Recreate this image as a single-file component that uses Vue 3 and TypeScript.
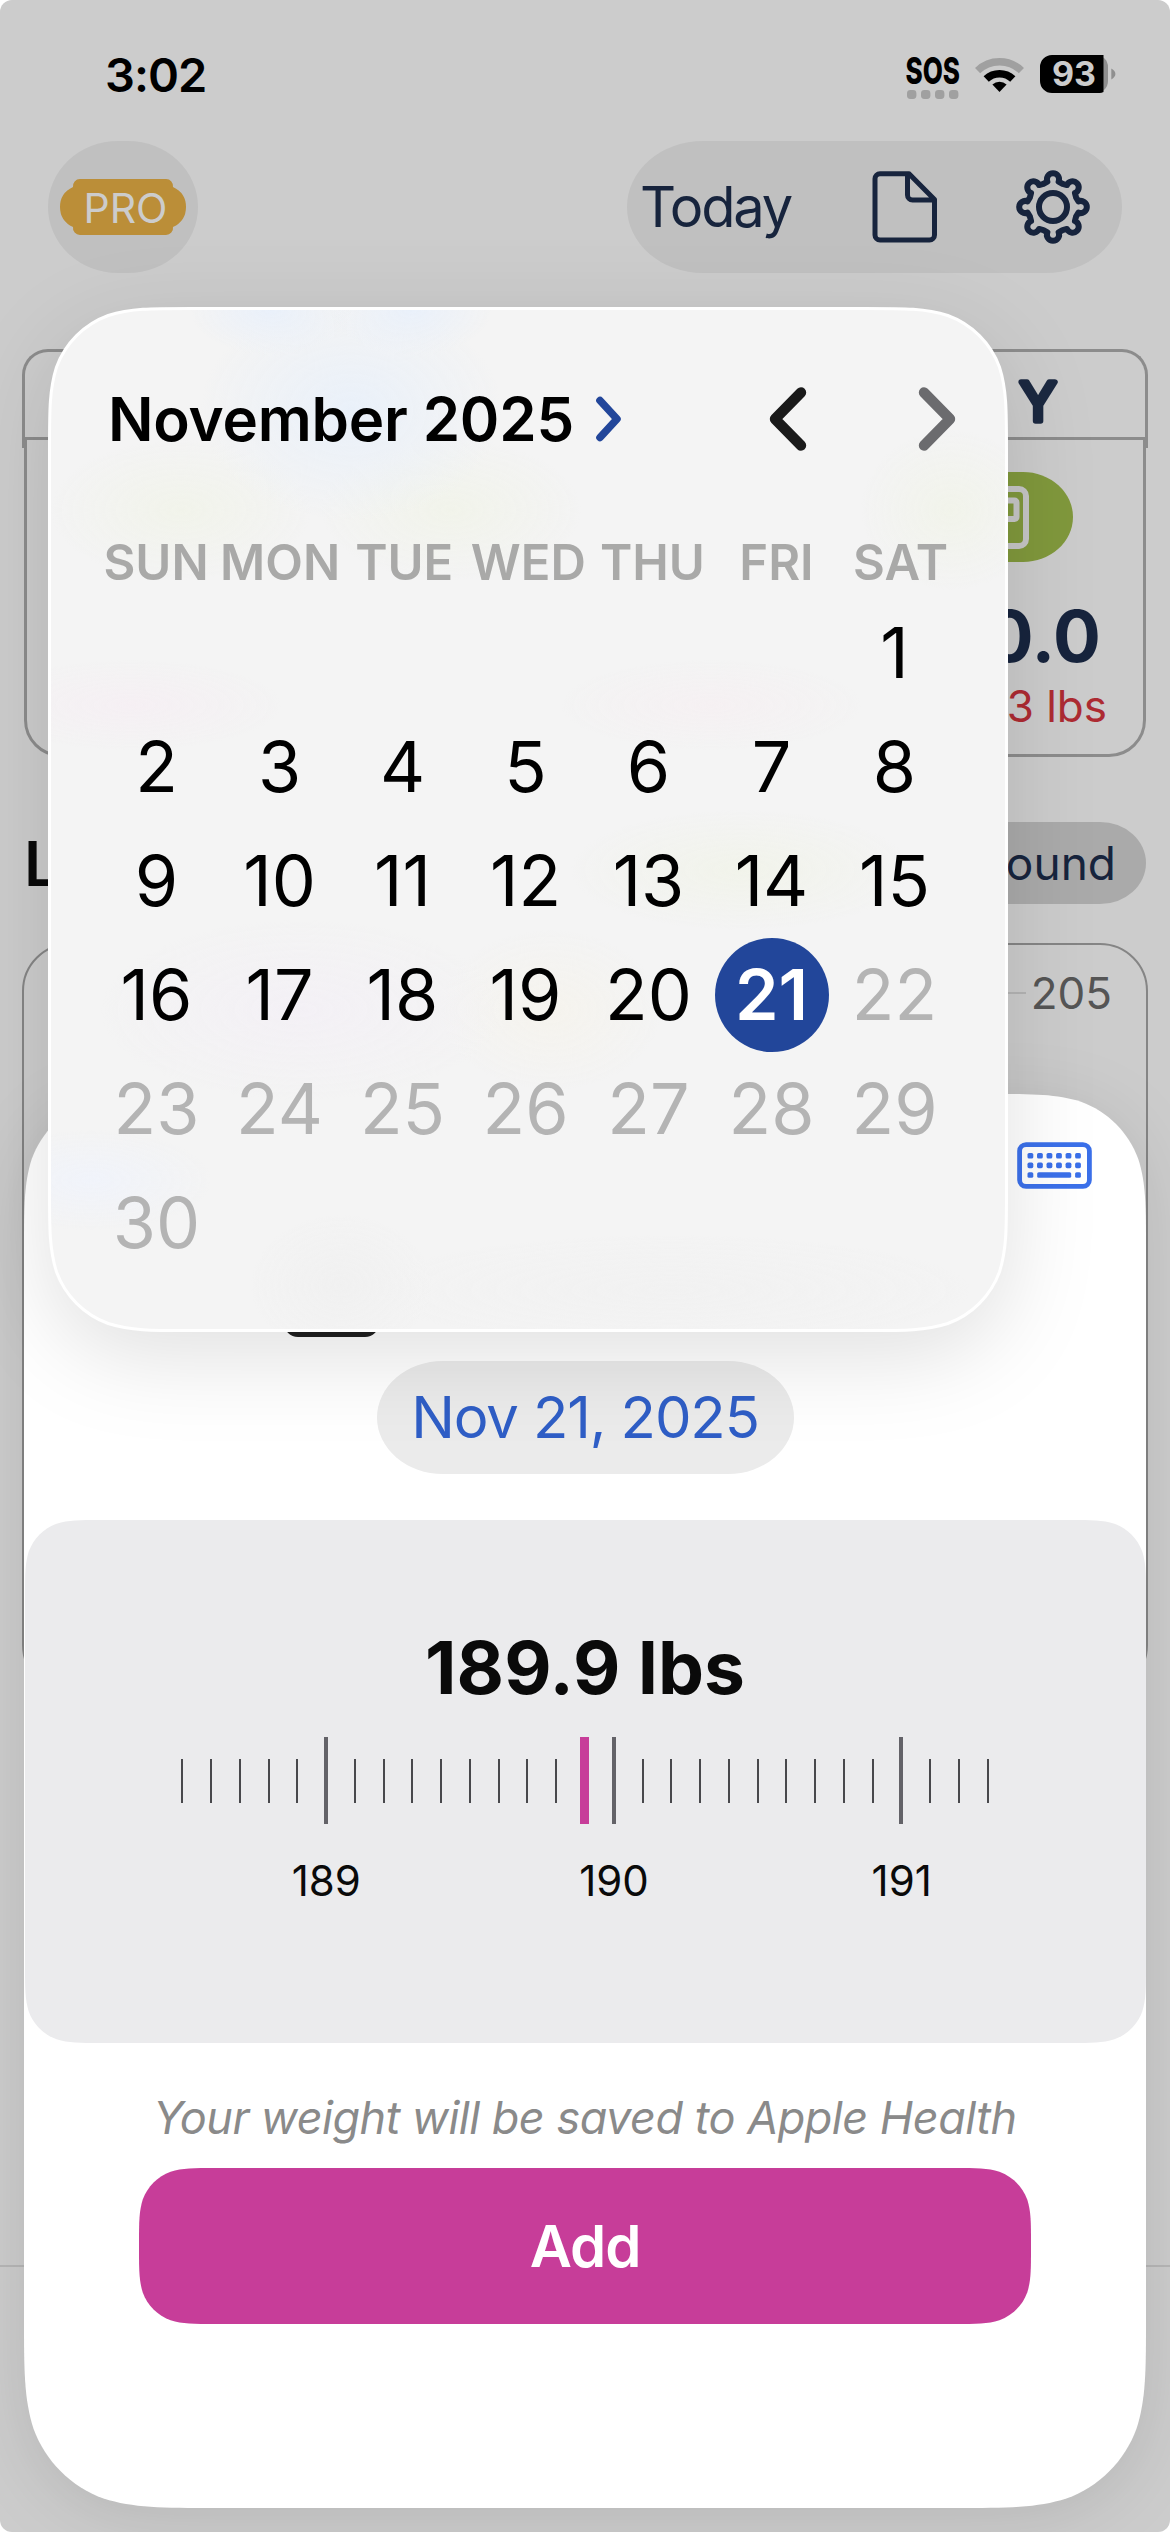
<script setup lang="ts">
interface Day {
  n: number
  state: 'normal' | 'selected' | 'future'
}

const weekdays: string[] = ['SUN', 'MON', 'TUE', 'WED', 'THU', 'FRI', 'SAT']

// November 2025 starts on a Saturday
const leadingBlanks = 6
const days: Day[] = Array.from({ length: 30 }, (_, i) => {
  const n = i + 1
  return { n, state: n === 21 ? 'selected' : n > 21 ? 'future' : 'normal' }
})

// Ruler: 29 tenths from 188.5 to 191.3
type Tick = 'minor' | 'major' | 'current'
const ticks: Tick[] = Array.from({ length: 29 }, (_, i) => {
  if (i === 14) return 'current'
  return i % 10 === 5 ? 'major' : 'minor'
})
const rulerLabels: number[] = [189, 190, 191]

// Rectangle with continuous corners; top and bottom radii may differ
function smoothRect(x: number, y: number, w: number, h: number, rt: number, rb: number = rt): string {
  const corner = (cx: number, cy: number, r: number, dx: number, dy: number, flip: boolean): string => {
    const pts: number[][] = [
      [1.528665, 0], [1.088493, 0], [0.868407, 0], [0.631494, 0.074911],
      [0.372824, 0.169059], [0.169059, 0.372824], [0.074911, 0.631494],
      [0, 0.868407], [0, 1.088493], [0, 1.528665],
    ]
    const list = flip ? [...pts].reverse() : pts
    const p = list.map(([a, b]) => `${(cx + dx * a * r).toFixed(2)} ${(cy + dy * b * r).toFixed(2)}`)
    return `L${p[0]}C${p[1]} ${p[2]} ${p[3]}C${p[4]} ${p[5]} ${p[6]}C${p[7]} ${p[8]} ${p[9]}`
  }
  return (
    `M${x + w / 2} ${y}` +
    corner(x + w, y, rt, -1, 1, false) +
    corner(x + w, y + h, rb, -1, -1, true) +
    corner(x, y + h, rb, 1, -1, false) +
    corner(x, y, rt, 1, 1, true) +
    'Z'
  )
}

// Eight-lobed gear outline
function gearPath(c: number): string {
  const at = (deg: number, r: number): string => {
    const t = (deg * Math.PI) / 180
    return `${(c + r * Math.cos(t)).toFixed(2)} ${(c + r * Math.sin(t)).toFixed(2)}`
  }
  let d = ''
  for (let k = 0; k < 8; k++) {
    const a = k * 45
    d += `${k ? 'L' : 'M'}${at(a - 12.5, 26)}A6.1 6.1 0 1 1 ${at(a + 12.5, 26)}`
    d += `L${at(a + 22.5, 25)}`
  }
  return d + 'Z'
}

const popoverShape = smoothRect(1.5, 1.5, 957, 1022, 93)
const sheetShape = smoothRect(0, 0, 1122, 1414, 103, 126)
const panelShape = smoothRect(0, 0, 1121, 523, 50)
const buttonShape = smoothRect(0, 0, 892, 156, 50)
const gear = gearPath(36)
const keyColumns: number[] = [0, 1, 2, 3, 4, 5]
</script>

<template>
  <div class="screen">
    <header class="status">
      <span class="time">3:02</span>
      <div class="status-icons">
        <svg class="sos" width="56" height="44" viewBox="0 0 56 44">
          <text x="0.5" y="29" textLength="54.5" lengthAdjust="spacingAndGlyphs">SOS</text>
          <rect v-for="i in 4" :key="i" :x="2 + (i - 1) * 14" y="35" width="9.4" height="9" rx="3.4" fill="#a0a0a0" />
        </svg>
        <svg class="wifi" width="49" height="37" viewBox="0 0 49 37">
          <path d="M2.6 14.6A31.5 31.5 0 0 1 46.4 14.6" fill="none" stroke="#a0a0a0" stroke-width="7.4" />
          <path d="M11.2 23A19.4 19.4 0 0 1 37.8 23" fill="none" stroke="#000" stroke-width="7.6" />
          <path d="M24.5 36L17.4 28.6A10.5 10.5 0 0 1 31.6 28.6Z" />
        </svg>
        <svg class="battery" width="76" height="38" viewBox="0 0 76 38">
          <path d="M56 0a12 12 0 0 1 12 12v14a12 12 0 0 1-12 12z" fill="#8f8f8f" />
          <path d="M12 0H63.5V37a8 8 0 0 1-4 1H12A12 12 0 0 1 0 26V12A12 12 0 0 1 12 0Z" />
          <path d="M71.3 13.6Q75.4 16 75.4 19Q75.4 22 71.3 24.4Z" fill="#8f8f8f" />
          <text x="34" y="31.2" text-anchor="middle">93</text>
        </svg>
      </div>
    </header>

    <nav class="toolbar">
      <div class="pro">
        <svg class="ticket" width="126" height="56" viewBox="0 0 126 56">
          <path d="M20 0H106a7 7 0 0 1 7 8Q126 14 126 28Q126 42 113 48a7 7 0 0 1-7 8H20a7 7 0 0 1-7-8Q0 42 0 28Q0 14 13 8a7 7 0 0 1 7-8Z" />
        </svg>
        <span class="pro-label">PRO</span>
      </div>
      <div class="actions">
        <span class="today">Today</span>
        <svg class="doc" width="66" height="72" viewBox="0 0 66 72">
          <path d="M37 2.8H8A5 5 0 0 0 3 7.8V64a5 5 0 0 0 5 5H57.5a5 5 0 0 0 5-5V28.5L37 2.8M35.5 3V24a5 5 0 0 0 5 5H62" />
        </svg>
        <svg class="gear" width="72" height="72" viewBox="0 0 72 72">
          <path :d="gear" />
          <circle cx="36" cy="36" r="14" />
        </svg>
      </div>
    </nav>

    <section class="summary">
      <div class="summary-head">
        <svg width="60" height="70" viewBox="0 0 60 70">
          <text x="30" y="55.5" text-anchor="middle">Y</text>
        </svg>
      </div>
      <div class="summary-body">
        <div class="badge">
          <svg width="52" height="63" viewBox="0 0 52 63">
            <rect x="3" y="3" width="46" height="57" rx="7" />
            <rect x="12.5" y="14.5" width="27" height="18.5" rx="2" />
          </svg>
        </div>
        <div class="value">0.0</div>
        <div class="delta">3 lbs</div>
      </div>
    </section>

    <div class="section-row">
      <h2>L</h2>
      <div class="chip">ound</div>
    </div>

    <section class="chart">
      <div class="axis">
        <i class="gridline"></i>
        <span>205</span>
      </div>
    </section>

    <div class="tabbar"></div>

    <section class="sheet">
      <svg class="shape sheet-shape" width="1122" height="1414" viewBox="0 0 1122 1414">
        <path :d="sheetShape" fill="#fff" />
      </svg>
      <div class="sheet-top">
        <svg width="75" height="47" viewBox="0 0 75 47">
          <rect x="2.6" y="2.6" width="69.8" height="41.8" rx="6.5" fill="none" stroke="#3b70ea" stroke-width="4.8" />
          <g fill="#3b70ea">
            <rect v-for="c in keyColumns" :key="'a' + c" :x="10.5 + c * 9.52" y="11" width="5.8" height="5.6" rx="1.6" />
            <rect v-for="c in keyColumns" :key="'b' + c" :x="10.5 + c * 9.52" y="20.6" width="5.8" height="5.6" rx="1.6" />
            <rect x="10.5" y="30.2" width="5.8" height="5.6" rx="1.6" />
            <rect x="20.2" y="30.2" width="34" height="5.6" rx="1.6" />
            <rect x="58.1" y="30.2" width="5.8" height="5.6" rx="1.6" />
          </g>
        </svg>
      </div>
      <div class="entry-icon"></div>
      <div class="date">Nov 21, 2025</div>

      <div class="panel">
        <svg class="shape" width="1121" height="523" viewBox="0 0 1121 523">
          <path :d="panelShape" fill="#ebebed" />
        </svg>
        <div class="weight">189.9 lbs</div>
        <div class="ruler">
          <div v-for="(t, i) in ticks" :key="i" class="cell"><i :class="['tick', t]"></i></div>
        </div>
        <div class="labels">
          <span v-for="l in rulerLabels" :key="l">{{ l }}</span>
        </div>
      </div>

      <p class="note">Your weight will be saved to Apple Health</p>
      <div class="add">
        <svg class="shape" width="892" height="156" viewBox="0 0 892 156">
          <path :d="buttonShape" fill="#c73d99" />
        </svg>
        <span>Add</span>
      </div>
    </section>

    <section class="popover">
      <svg class="shape popover-shape" width="960" height="1025" viewBox="0 0 960 1025">
        <path :d="popoverShape" fill="#f4f4f4" stroke="#fff" stroke-width="3" />
      </svg>
      <div class="tints"></div>
      <div class="month-row">
        <span class="month">November 2025</span>
        <svg class="open" width="28" height="46" viewBox="0 0 28 46">
          <path d="M5 4.5L22 23L5 41.5" stroke="#22469a" stroke-width="7.6" />
        </svg>
        <svg class="prev" width="38" height="64" viewBox="0 0 38 64">
          <path d="M32 5.5L6 32L32 58.5" stroke="#1a1a1a" stroke-width="10.4" />
        </svg>
        <svg class="next" width="38" height="64" viewBox="0 0 38 64">
          <path d="M6 5.5L32 32L6 58.5" stroke="#6b6b6e" stroke-width="10.4" />
        </svg>
      </div>
      <div class="weekdays">
        <span v-for="w in weekdays" :key="w">{{ w }}</span>
      </div>
      <div class="days">
        <span v-for="b in leadingBlanks" :key="'blank' + b"></span>
        <span v-for="d in days" :key="d.n" :class="['day', d.state]">{{ d.n }}</span>
      </div>
    </section>
  </div>
</template>

<style>
body {
  background: #fff;
}
</style>

<style scoped>
.screen {
  position: relative;
  display: flex;
  flex-direction: column;
  width: 1170px;
  height: 2532px;
  overflow: hidden;
  border-radius: 12px;
  background: #ccc;
  font-family: Inter, "Liberation Sans", sans-serif;
  color: #17243d;
  white-space: nowrap;
}
svg {
  display: block;
  flex: none;
  overflow: visible;
}
.shape {
  position: absolute;
  left: 0;
  top: 0;
}

/* status bar */
.status {
  display: flex;
  align-items: center;
  justify-content: space-between;
  box-sizing: border-box;
  height: 141px;
  padding: 7px 54px 0 105px;
}
.time {
  font-size: 47px;
  font-weight: 600;
  letter-spacing: -1px;
  color: #000;
}
.status-icons {
  display: flex;
  align-items: center;
}
.sos {
  margin-top: 5px;
}
.sos text {
  font-size: 37px;
  font-weight: 800;
  fill: #000;
}
.wifi {
  margin-left: 14px;
}
.battery {
  margin-left: 16px;
}
.battery text {
  font-size: 34px;
  font-weight: 700;
  fill: #ccc;
}

/* toolbar */
.toolbar {
  display: flex;
  justify-content: space-between;
  height: 132px;
  padding: 0 48px;
}
.pro {
  display: grid;
  place-items: center;
  width: 150px;
  border-radius: 70px / 66px;
  background: #c0c0c0;
}
.pro > * {
  grid-area: 1 / 1;
}
.ticket {
  fill: #bb8e38;
}
.pro-label {
  margin: 2px 0 0 5px;
  font-size: 41px;
  color: #ccc;
}
.actions {
  display: flex;
  align-items: center;
  box-sizing: border-box;
  width: 495px;
  padding-left: 13px;
  border-radius: 76px / 66px;
  background: #c0c0c0;
}
.today {
  width: 232px;
  font-size: 56px;
  letter-spacing: -2.1px;
}
.doc,
.gear {
  fill: none;
  stroke: #17243d;
  stroke-linecap: round;
  stroke-linejoin: round;
}
.doc {
  stroke-width: 5;
}
.gear {
  margin-left: 79px;
  stroke-width: 6;
}

/* summary card */
.summary {
  margin: 76px 22px 0;
}
.summary-head {
  display: flex;
  justify-content: flex-end;
  align-items: center;
  box-sizing: border-box;
  height: 99px;
  padding-right: 77px;
  border: 3px solid #8c8c8c;
  border-bottom: 0;
  border-radius: 26px 26px 0 0;
}
.summary-head text {
  font-size: 54px;
  font-weight: 400;
  fill: #1b2840;
  stroke: #1b2840;
  stroke-width: 5.5;
  stroke-linejoin: round;
}
.summary-body {
  display: flex;
  flex-direction: column;
  align-items: flex-end;
  box-sizing: border-box;
  height: 320px;
  margin: -11px 2px 0;
  padding-top: 32px;
  border: 3px solid #8c8c8c;
  border-radius: 0 0 37px 37px;
}
.badge {
  display: grid;
  place-items: center;
  width: 140px;
  height: 90px;
  margin-right: 70px;
  border-radius: 50px / 45px;
  background: #80983c;
}
.badge svg {
  fill: none;
  stroke: #c6c6c6;
  stroke-width: 6;
}
.value {
  height: 80px;
  margin: 34px 42px 0 0;
  font-size: 71px;
  line-height: 80px;
  font-weight: 700;
}
.delta {
  height: 50px;
  margin: 5px 36px 0 0;
  font-size: 44px;
  line-height: 50px;
  color: #ad2b32;
}

/* section heading */
.section-row {
  display: flex;
  justify-content: space-between;
  align-items: center;
  height: 82px;
  margin-top: 65px;
  padding: 0 24px;
}
.section-row h2 {
  margin: 0;
  font-size: 62px;
  font-weight: 600;
  color: #0a0a0a;
}
.chip {
  box-sizing: border-box;
  width: 260px;
  padding-right: 30px;
  border-radius: 46px / 41px;
  background: #aaa;
  font-size: 46px;
  line-height: 82px;
  text-align: right;
}

/* chart card */
.chart {
  box-sizing: border-box;
  height: 750px;
  margin: 39px 22px 0;
  border: 2px solid #858585;
  border-radius: 48px;
}
.axis {
  display: flex;
  align-items: center;
  justify-content: flex-end;
  height: 96px;
  padding-right: 34px;
  font-size: 44px;
  color: #555;
}
.gridline {
  width: 60px;
  height: 2px;
  margin-right: 5px;
  background: #b4b4b4;
}
.tabbar {
  box-sizing: border-box;
  height: 267px;
  margin-top: auto;
  border-top: 2px solid #b6b6b6;
}

/* weight entry sheet */
.sheet {
  position: absolute;
  left: 24px;
  top: 1094px;
  display: flex;
  flex-direction: column;
  align-items: center;
  width: 1122px;
  height: 1414px;
}
.sheet-shape {
  filter: drop-shadow(0 10px 32px rgba(0, 0, 0, 0.1));
}
.sheet > *:not(.shape) {
  position: relative;
}
.sheet-top {
  display: flex;
  justify-content: flex-end;
  box-sizing: border-box;
  width: 100%;
  height: 95px;
  padding: 48px 54px 0 0;
}
.entry-icon {
  align-self: flex-start;
  width: 95px;
  height: 60px;
  margin: 88px 0 0 260px;
  border-radius: 14px;
  background: #202020;
}
.date {
  width: 417px;
  height: 113px;
  margin-top: 24px;
  border-radius: 66px / 56.5px;
  background: #ebebeb;
  font-size: 58px;
  line-height: 113px;
  letter-spacing: -1.1px;
  text-align: center;
  color: #2f5ec6;
}
.panel {
  box-sizing: border-box;
  width: 1121px;
  height: 523px;
  margin-top: 46px;
  padding-top: 104px;
  color: #0a0a0a;
}
.panel > *:not(.shape) {
  position: relative;
}
.weight {
  height: 88px;
  font-size: 73px;
  line-height: 88px;
  font-weight: 700;
  letter-spacing: 0.1px;
  text-align: center;
}
.ruler {
  display: flex;
  justify-content: center;
  align-items: center;
  height: 87px;
  margin-top: 25px;
}
.cell {
  display: flex;
  justify-content: center;
  width: 28.77px;
}
.tick {
  width: 2px;
  height: 44px;
  flex: none;
  background: #48484c;
}
.tick.major {
  width: 4px;
  height: 87px;
  background: #636268;
}
.tick.current {
  width: 9px;
  height: 87px;
  background: #c73d99;
}
.labels {
  display: flex;
  margin: 32px 0 0 158px;
}
.labels span {
  width: 287.7px;
  font-size: 42px;
  line-height: 50px;
  text-align: center;
}
.note {
  margin: 45px 0 0;
  font-size: 45px;
  line-height: 60px;
  font-style: italic;
  letter-spacing: -0.5px;
  color: #8a8a8a;
}
.add {
  width: 892px;
  height: 156px;
  margin-top: 20px;
  font-size: 58px;
  line-height: 156px;
  font-weight: 600;
  letter-spacing: -1px;
  text-align: center;
  color: #fff;
}
.add span {
  position: relative;
}

/* calendar popover */
.popover {
  position: absolute;
  left: 48px;
  top: 307px;
  box-sizing: border-box;
  width: 960px;
  height: 1025px;
  padding-top: 62px;
}
.popover > *:not(.shape):not(.tints) {
  position: relative;
}
.popover-shape {
  filter: drop-shadow(0 24px 44px rgba(0, 0, 0, 0.12));
}
.tints {
  position: absolute;
  inset: 3px;
  border-radius: 92px;
  background:
    radial-gradient(ellipse 80px 45px at 220px 0, #e9f0fa, transparent),
    radial-gradient(ellipse 80px 45px at 360px 0, #e9f0fa, transparent),
    radial-gradient(ellipse 150px 110px at 300px 100px, #e9f0f9, transparent),
    radial-gradient(ellipse 130px 70px at 130px 200px, #f1f3ea, transparent),
    radial-gradient(ellipse 130px 70px at 400px 200px, #f1f3ea, transparent),
    radial-gradient(ellipse 90px 80px at 900px 200px, #f1f3ea, transparent),
    radial-gradient(ellipse 150px 45px at 80px 395px, #f5eff3, transparent),
    radial-gradient(ellipse 150px 45px at 660px 395px, #f5f0f2, transparent),
    radial-gradient(ellipse 170px 60px at 690px 560px, #f1f3ea, transparent),
    radial-gradient(ellipse 200px 90px at 250px 700px, #f3f0f5, transparent),
    radial-gradient(ellipse 110px 80px at 500px 700px, #f5f3ed, transparent),
    radial-gradient(ellipse 120px 50px at 40px 870px, #f0f3fa, transparent),
    radial-gradient(ellipse 90px 70px at 290px 975px, #f0f0f0, transparent),
    radial-gradient(ellipse 300px 55px at 620px 980px, #f1f1f1, transparent);
}
.month-row {
  display: flex;
  align-items: center;
  height: 100px;
  padding: 0 52px 0 60px;
}
.month-row svg {
  fill: none;
  stroke-linecap: round;
  stroke-linejoin: round;
}
.month {
  width: 484px;
  font-size: 60px;
  font-weight: 600;
  letter-spacing: -0.2px;
  color: #000;
}
.open {
  margin-left: 3px;
}
.prev {
  margin-left: auto;
}
.next {
  margin-left: 111px;
}
.weekdays {
  display: grid;
  grid-template-columns: repeat(7, 124.1px);
  height: 60px;
  margin: 64px 0 0 46px;
}
.weekdays span {
  display: flex;
  justify-content: center;
  font-size: 49px;
  line-height: 60px;
  font-weight: 600;
  color: #a9a9a8;
}
.days {
  display: grid;
  grid-template-columns: repeat(7, 123px);
  grid-auto-rows: 114px;
  justify-items: center;
  margin: 3px 0 0 47px;
}
.day {
  width: 114px;
  font-size: 70px;
  line-height: 114px;
  text-align: center;
  color: #000;
}
.day.future {
  color: #b4b4b4;
}
.day.selected {
  border-radius: 50%;
  background: #22469a;
  font-weight: 600;
  color: #fff;
}
</style>
